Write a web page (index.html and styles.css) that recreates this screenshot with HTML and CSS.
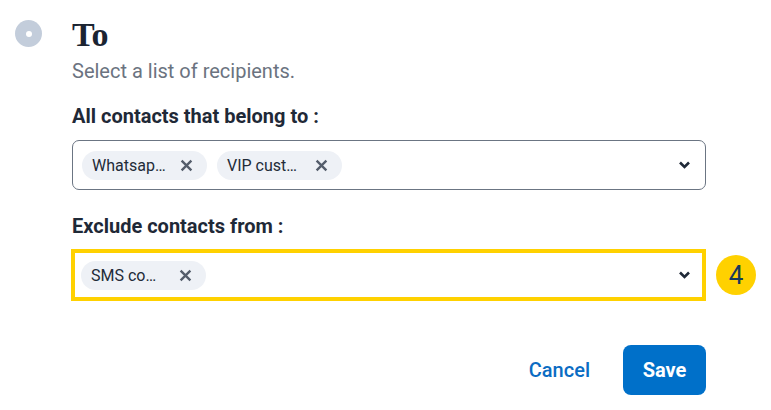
FILE: index.html
```html
<!DOCTYPE html>
<html>
<head>
<meta charset="utf-8">
<link rel="stylesheet" href="styles.css">
</head>
<body>
<div class="step">
  <div class="marker"><span class="dot"></span></div>
  <div class="content">
    <h1 class="title">To</h1>
    <p class="subtitle">Select a list of recipients.</p>

    <div class="field">
      <div class="label">All contacts that belong to :</div>
      <div class="select">
        <div class="chips">
          <span class="chip"><span class="chip-text">Whatsap…</span>
            <svg class="x" viewBox="0 0 12 12"><path d="M1.5 1.5L10.5 10.5M10.5 1.5L1.5 10.5"/></svg></span>
          <span class="chip"><span class="chip-text">VIP cust…</span>
            <svg class="x" viewBox="0 0 12 12"><path d="M1.5 1.5L10.5 10.5M10.5 1.5L1.5 10.5"/></svg></span>
        </div>
        <svg class="chev" viewBox="0 0 12 8"><path d="M1.5 1.5L6 6L10.5 1.5"/></svg>
      </div>
    </div>

    <div class="field second">
      <div class="label">Exclude contacts from :</div>
      <div class="select-row">
        <div class="select highlight">
          <div class="chips">
            <span class="chip"><span class="chip-text">SMS co…</span>
              <svg class="x" viewBox="0 0 12 12"><path d="M1.5 1.5L10.5 10.5M10.5 1.5L1.5 10.5"/></svg></span>
          </div>
          <svg class="chev" viewBox="0 0 12 8"><path d="M1.5 1.5L6 6L10.5 1.5"/></svg>
        </div>
        <span class="badge">4</span>
      </div>
    </div>

    <div class="actions">
      <button class="btn-link">Cancel</button>
      <button class="btn-primary">Save</button>
    </div>
  </div>
</div>
</body>
</html>
```
FILE: styles.css
```css
* { box-sizing: border-box; }
html, body { margin: 0; background: #fff; }
body {
  font-family: Roboto, "Noto Sans", sans-serif;
  color: #1f2937;
}
.step {
  display: flex;
  padding: 20px 0 0 15px;
}
.marker {
  width: 27px;
  height: 27px;
  border-radius: 50%;
  background: #c3cddb;
  display: flex;
  align-items: center;
  justify-content: center;
  flex: none;
}
.dot {
  width: 6px;
  height: 6px;
  border-radius: 50%;
  background: #fff;
}
.content {
  margin-left: 30px;
  width: 634px;
  display: flex;
  flex-direction: column;
}
.title {
  margin: -3px 0 0 0;
  font-family: "Liberation Serif", "DejaVu Serif", serif;
  font-weight: 700;
  font-size: 34px;
  line-height: 36px;
  color: #1b2432;
}
.subtitle {
  margin: 6px 0 0 0;
  font-size: 20px;
  line-height: 24px;
  color: #6b7380;
}
.field {
  margin-top: 21px;
}
.field.second { margin-top: 24px; }
.label {
  font-weight: 700;
  font-size: 20px;
  line-height: 24px;
  color: #1f2937;
}
.select {
  margin-top: 12px;
  height: 50px;
  border: 1px solid #6b7583;
  border-radius: 7px;
  display: flex;
  align-items: center;
  padding: 0 14px 0 9px;
  justify-content: space-between;
}
.select-row {
  display: flex;
  align-items: center;
  position: relative;
  margin-top: 11px;
}
.select.highlight {
  margin: 0 0 0 -1px;
  width: 636px;
  height: 52px;
  border: 4px solid #ffd100;
  border-radius: 0;
  padding: 0 11px 0 6px;
}
.chips {
  display: flex;
  gap: 10px;
}
.chip {
  display: inline-flex;
  align-items: center;
  height: 29px;
  padding: 0 14px 0 10px;
  border-radius: 15px;
  background: #eef1f6;
  font-size: 16px;
  color: #222b38;
}
.chip-text {
  display: inline-block;
  min-width: 75px;
}
.x {
  width: 13px;
  height: 13px;
  margin-left: 13px;
  fill: none;
  stroke: #545d6b;
  stroke-width: 2.2;
}
.chev {
  width: 13px;
  height: 8px;
  fill: none;
  stroke: #1f2937;
  stroke-width: 2.6;
}
.badge {
  position: absolute;
  left: 644px;
  top: 50%;
  transform: translateY(-50%);
  width: 40px;
  height: 40px;
  border-radius: 50%;
  background: #ffd100;
  color: #183a5c;
  font-size: 26px;
  display: flex;
  align-items: center;
  justify-content: center;
}
.actions {
  margin-top: 44px;
  display: flex;
  justify-content: flex-end;
  align-items: center;
  gap: 33px;
}
button {
  font-family: Roboto, "Noto Sans", sans-serif;
  font-size: 20px;
  font-weight: 500;
  border: none;
  cursor: pointer;
}
.btn-link {
  background: none;
  color: #0b6cc3;
  padding: 0;
}
.btn-primary {
  background: #0070c9;
  color: #fff;
  height: 50px;
  width: 83px;
  border-radius: 8px;
  font-weight: 700;
}
```
